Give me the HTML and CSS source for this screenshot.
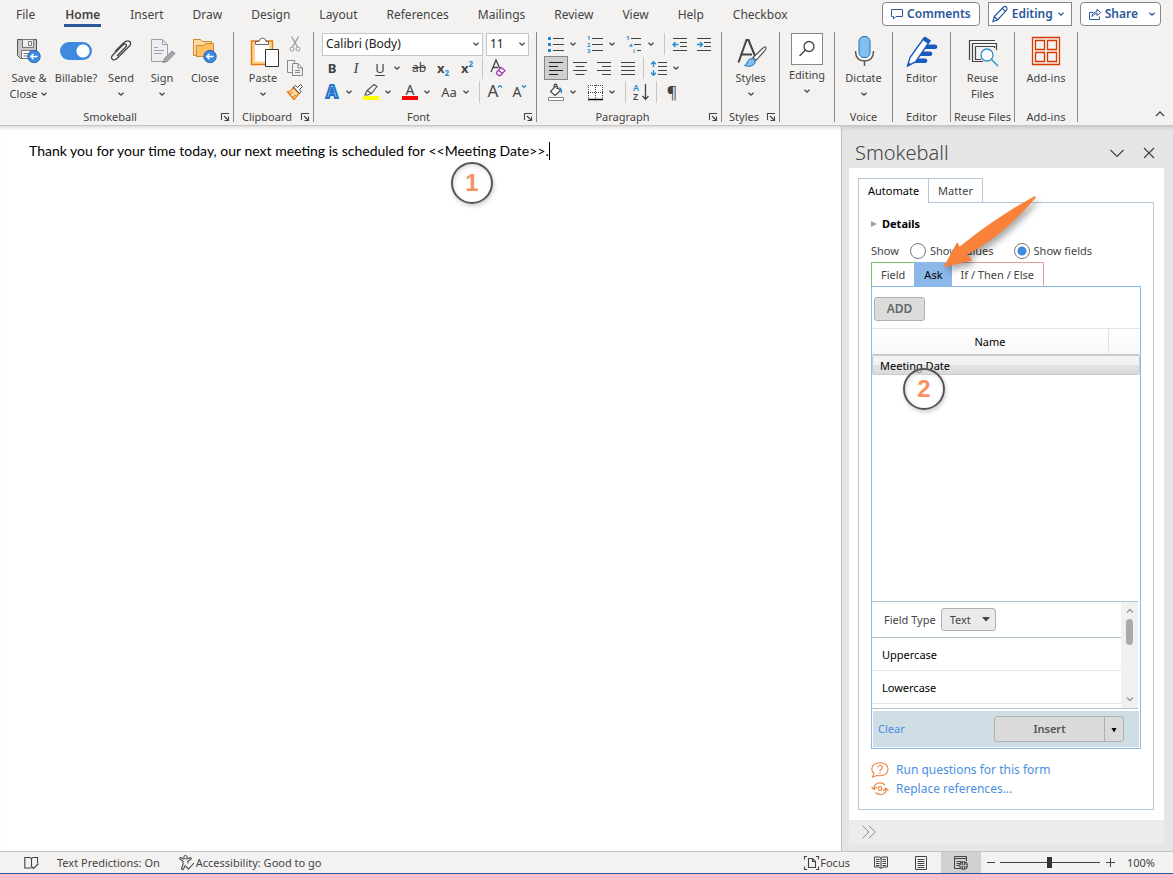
FILE: index.html
```html
<!DOCTYPE html>
<html lang="en">
<head>
  <meta charset="UTF-8">
  <title>Word - Smokeball</title>
  <link rel="stylesheet" href="styles.css">
</head>
<body>
  <!-- shared icons -->
  <svg class="defs" aria-hidden="true">
    <symbol id="chev" viewBox="0 0 8 8"><path d="M1.5 2.8L4 5.2L6.5 2.8" fill="none" stroke="currentColor" stroke-width="1.3"/></symbol>
    <symbol id="launch" viewBox="0 0 10 10"><path d="M1.5 8V1.500H9M4 4L8 8M8.500 4.500V8.500H4.500" fill="none" stroke="#444" stroke-width="1.1"/></symbol>
    <symbol id="back" viewBox="0 0 14 14"><circle cx="7" cy="7" r="6.200" fill="#3f8ae0" stroke="#2468b8"/><path d="M10.500 7H4M6.500 4.300L3.800 7L6.500 9.700" fill="none" stroke="#fff" stroke-width="1.300"/></symbol>
  </svg>

  <header>
    <div class="top">
      <nav class="menu">
        <a href="#">File</a>
        <a href="#" class="current">Home</a>
        <a href="#">Insert</a>
        <a href="#">Draw</a>
        <a href="#">Design</a>
        <a href="#">Layout</a>
        <a href="#">References</a>
        <a href="#">Mailings</a>
        <a href="#">Review</a>
        <a href="#">View</a>
        <a href="#">Help</a>
        <a href="#">Checkbox</a>
      </nav>
      <div class="actions">
        <button class="comments"><svg width="12" height="12" viewBox="0 0 12 12"><path d="M.5 1.500H11.500V8.500H5L2.500 11V8.500H.5Z" fill="none" stroke="#2b579a"/></svg>Comments</button>
        <button class="mode"><svg width="16" height="18" viewBox="0 0 16 18"><path d="M1 16.500L2.300 11.500L11.500 2Q13 .8 14.400 2.200Q15.800 3.700 14.500 5.200L5.500 15ZM10.200 3.400L13.200 6.400M2.300 11.500L5.500 15" fill="none" stroke="#2b579a" stroke-width="1.200"/></svg>Editing<svg width="8" height="8"><use href="#chev"/></svg></button>
        <button class="share"><svg width="12" height="12" viewBox="0 0 12 12"><path d="M4 4.500H.5V11.500H10.500V8.500M3 8.500Q3.500 4 8 3.800V1L11.500 4.500L8 7.500V5.500Q5 5.500 3 8.500Z" fill="none" stroke="#2b579a"/></svg>Share<svg class="last" width="8" height="8"><use href="#chev"/></svg></button>
      </div>
    </div>

    <div class="ribbon">
      <section class="group smokeball">
        <div class="tools">
          <button class="big w46"><svg width="32" height="32" viewBox="0 0 32 32"><path d="M4.500 3.500H23.500V22.500H7.500L4.500 19.500Z" fill="#c8c6c4" stroke="#555"/><path d="M9.500 3.500H20.500V11.500H9.500Z" fill="#eee" stroke="#777"/><path d="M15.500 5.500H18.500V9.500H15.500Z" fill="#fff" stroke="#777"/><path d="M8.500 14.500H21.500V22.500H8.500Z" fill="#fff" stroke="#777"/><path d="M10.500 17.500H17M10.500 20H15" stroke="#777"/><use href="#back" x="14" y="13.500" width="14" height="14"/></svg><span>Save &amp;<br>Close <svg width="8" height="8"><use href="#chev"/></svg></span></button>
          <label class="big w48"><input type="checkbox" class="switch" checked><span>Billable?</span></label>
          <button class="big w42"><svg width="32" height="32" viewBox="0 0 32 32"><path d="M12 20L20.500 11.300Q22.300 9.400 20.800 8.300Q19.300 7.400 17.800 9L8.300 18.500Q5.300 21.500 7.300 23.200Q9.500 25 12.500 22L24 10.500Q27 7.200 24.500 5.400Q22 3.800 19 6.500L10 15.500" fill="none" stroke="#444" stroke-width="1.300"/></svg><span>Send<br><svg width="8" height="8"><use href="#chev"/></svg></span></button>
          <button class="big w40"><svg width="32" height="32" viewBox="0 0 32 32"><path d="M5.500 3.500H16.500L21.500 8.500V25.500H5.500Z" fill="#f0eef2" stroke="#a19fa5"/><path d="M16.500 3.500V8.500H21.500M8 11.500H12M8 14.500H18M8 17.500H16" fill="none" stroke="#a19fa5"/><path d="M17 26.500L18.500 22.500L26 15L29 17.500L21 25.500Z" fill="#a8a6aa" stroke="#8d8b90"/></svg><span>Sign<br><svg width="8" height="8"><use href="#chev"/></svg></span></button>
          <button class="big w46"><svg width="32" height="32" viewBox="0 0 32 32"><path d="M4.500 19.500V3.500H11.500L13.500 5.500H22.500V19.500Z" fill="#fbd9a0" stroke="#c98b2b"/><path d="M7.500 20.500V9.500H14.500L17 7.500H24.500V20.500Z" fill="#ffbf5e" stroke="#c98b2b"/><use href="#back" x="14" y="13.500" width="14" height="14"/></svg><span>Close</span></button>
        </div>
        <div class="caption"><span>Smokeball</span><button aria-label="Smokeball options"><svg width="10" height="10"><use href="#launch"/></svg></button></div>
      </section>

      <section class="group clipboard">
        <div class="tools">
          <button class="big w46"><svg width="34" height="32" viewBox="-1 0 34 32"><path d="M6.500 6.500H23.500V27H6.500Z" fill="#fff" stroke="#ffd28a" stroke-width="3"/><path d="M4.500 5H25.500V28.500H4.500Z" fill="none" stroke="#e07a10" stroke-width="1.400"/><path d="M8.500 8.500V5.500H12Q12.500 2 15.500 2Q18.500 2 19 5.500H21.500V8.500Z" fill="#fff" stroke="#666"/><path d="M18.500 13.500H31.500V30.500H18.500Z" fill="#fff" stroke="#333"/></svg><span>Paste<br><svg width="8" height="8"><use href="#chev"/></svg></span></button>
          <div class="stack">
            <button class="small" aria-label="Cut"><svg width="18" height="18" viewBox="0 0 18 18"><path d="M5.500 1.500L11.500 12M12.500 1.500L6.500 12" fill="none" stroke="#a19f9d" stroke-width="1.400"/><circle cx="6" cy="14" r="2" fill="none" stroke="#a19f9d"/><circle cx="12" cy="14" r="2" fill="none" stroke="#a19f9d"/></svg></button>
            <button class="small" aria-label="Copy"><svg width="18" height="18" viewBox="0 0 18 18"><path d="M6.500 13.500H1.500V1.500H8.500V4.500M6.500 4.500H12L16.500 9V16.500H6.500ZM12 4.500V9H16.500M9 11.500H14M9 13.500H14" fill="none" stroke="#8a8886"/></svg></button>
            <button class="small" aria-label="Format Painter"><svg width="18" height="18" viewBox="0 0 18 18"><path d="M7 4.500L13 10.500L8 16.500L1.500 9Q5 8.500 7 4.500Z" fill="#ffd9a8" stroke="#e07a10" stroke-width="1.300"/><path d="M3 11L7 9.500M6 14L10 12" stroke="#e07a10"/><path d="M7.500 4L9.500 2.500L11.500 4.500L14.500 1.500L16.500 3.500L13.500 6.500L15 8.500L13.500 10.500Z" fill="#fff" stroke="#444"/></svg></button>
          </div>
        </div>
        <div class="caption"><span>Clipboard</span><button aria-label="Clipboard options"><svg width="10" height="10"><use href="#launch"/></svg></button></div>
      </section>

      <section class="group font">
        <div class="tools rows">
          <div class="row combos">
            <select class="family" aria-label="Font"><option>Calibri (Body)</option></select>
            <select class="size" aria-label="Font size"><option>11</option></select>
          </div>
          <div class="row">
            <button class="small bold">B</button>
            <button class="small italic">I</button>
            <span class="split"><button class="small underline">U</button><button class="drop" aria-label="Underline style"><svg width="8" height="8"><use href="#chev"/></svg></button></span>
            <button class="small strike">ab</button>
            <button class="small script">x<sub>2</sub></button>
            <button class="small script">x<sup>2</sup></button>
            <i class="sep"></i>
            <button class="small" aria-label="Clear formatting"><svg width="20" height="20" viewBox="0 0 20 20"><path d="M3 14L8 2L12 11M5 9.500H10" fill="none" stroke="#444" stroke-width="1.300"/><path d="M8.500 14.500L13 9.500L17 12.500L12.500 17.500H10.500L8.500 15.500ZM10.500 12.500L14.500 15.500" fill="#fff" stroke="#a33ab5" stroke-width="1.300"/></svg></button>
          </div>
          <div class="row">
            <span class="split"><button class="small" aria-label="Text effects"><svg width="18" height="18" viewBox="0 0 18 18"><text x="9" y="15" text-anchor="middle" class="glow">A</text></svg></button><button class="drop" aria-label="Text effects menu"><svg width="8" height="8"><use href="#chev"/></svg></button></span>
            <span class="split"><button class="small" aria-label="Highlight"><svg width="18" height="18" viewBox="0 0 18 18"><path d="M3 12L5 7.500L12 1.500L15 3.500L9.500 10.500L5.500 12ZM5 7.500L9.500 10.500" fill="none" stroke="#555" stroke-width="1.200"/><path d="M1 13H17V17H1Z" fill="#ff0"/></svg></button><button class="drop" aria-label="Highlight color"><svg width="8" height="8"><use href="#chev"/></svg></button></span>
            <span class="split"><button class="small" aria-label="Font color"><svg width="18" height="18" viewBox="0 0 18 18"><text x="9" y="11.500" text-anchor="middle" class="letter">A</text><path d="M1 13H17V17H1Z" fill="#f00"/></svg></button><button class="drop" aria-label="Font color menu"><svg width="8" height="8"><use href="#chev"/></svg></button></span>
            <span class="split"><button class="small">Aa</button><button class="drop" aria-label="Change case menu"><svg width="8" height="8"><use href="#chev"/></svg></button></span>
            <i class="sep"></i>
            <button class="small" aria-label="Grow font"><svg width="18" height="18" viewBox="0 0 18 18"><text x="7" y="14" text-anchor="middle" class="letter large">A</text><path d="M12 4.500L14 2.500L16 4.500" fill="none" stroke="#1e8bd1" stroke-width="1.200"/></svg></button>
            <button class="small" aria-label="Shrink font"><svg width="18" height="18" viewBox="0 0 18 18"><text x="7" y="14" text-anchor="middle" class="letter">A</text><path d="M12 2.500L14 4.500L16 2.500" fill="none" stroke="#1e8bd1" stroke-width="1.200"/></svg></button>
          </div>
        </div>
        <div class="caption"><span>Font</span><button aria-label="Font options"><svg width="10" height="10"><use href="#launch"/></svg></button></div>
      </section>

      <section class="group paragraph">
        <div class="tools rows">
          <div class="row">
            <span class="split"><button class="small" aria-label="Bullets"><svg width="18" height="18" viewBox="0 0 18 18"><path d="M1 2H4V5H1ZM1 8H4V11H1ZM1 14H4V17H1Z" fill="#1e8bd1"/><path d="M6 3.500H17M6 9.500H17M6 15.500H17" stroke="#444"/></svg></button><button class="drop" aria-label="Bullet library"><svg width="8" height="8"><use href="#chev"/></svg></button></span>
            <span class="split"><button class="small" aria-label="Numbering"><svg width="18" height="18" viewBox="0 0 18 18"><g class="digits"><text x="1" y="5">1</text><text x="1" y="11.500">2</text><text x="1" y="18">3</text></g><path d="M6 3.500H17M6 9.500H17M6 15.500H17" stroke="#444"/></svg></button><button class="drop" aria-label="Numbering library"><svg width="8" height="8"><use href="#chev"/></svg></button></span>
            <span class="split"><button class="small" aria-label="Multilevel list"><svg width="18" height="18" viewBox="0 0 18 18"><g class="digits"><text x="1" y="5">1</text><text x="4" y="11.500">a</text><text x="8" y="18">i</text></g><path d="M6 3.500H16M9 9.500H16M12 15.500H16" stroke="#444"/></svg></button><button class="drop" aria-label="List library"><svg width="8" height="8"><use href="#chev"/></svg></button></span>
            <i class="sep"></i>
            <button class="small" aria-label="Decrease indent"><svg width="18" height="18" viewBox="0 0 18 18"><path d="M2 3.500H16M9 7.500H16M9 11.500H16M2 15.500H16" stroke="#444"/><path d="M7.500 9.500H2.500M4.500 7L2 9.500L4.500 12" fill="none" stroke="#1e8bd1" stroke-width="1.300"/></svg></button>
            <button class="small" aria-label="Increase indent"><svg width="18" height="18" viewBox="0 0 18 18"><path d="M2 3.500H16M9 7.500H16M9 11.500H16M2 15.500H16" stroke="#444"/><path d="M2 9.500H7M5 7L7.500 9.500L5 12" fill="none" stroke="#1e8bd1" stroke-width="1.300"/></svg></button>
          </div>
          <div class="row">
            <button class="small on" aria-label="Align left"><svg width="18" height="18" viewBox="0 0 18 18"><path d="M2 3.500H16M2 7.500H11M2 11.500H16M2 15.500H11" stroke="#222"/></svg></button>
            <button class="small" aria-label="Center"><svg width="18" height="18" viewBox="0 0 18 18"><path d="M2 3.500H16M4.500 7.500H13.500M2 11.500H16M4.500 15.500H13.500" stroke="#444"/></svg></button>
            <button class="small" aria-label="Align right"><svg width="18" height="18" viewBox="0 0 18 18"><path d="M2 3.500H16M7 7.500H16M2 11.500H16M7 15.500H16" stroke="#444"/></svg></button>
            <button class="small" aria-label="Justify"><svg width="18" height="18" viewBox="0 0 18 18"><path d="M2 3.500H16M2 7.500H16M2 11.500H16M2 15.500H16" stroke="#444"/></svg></button>
            <i class="sep"></i>
            <span class="split"><button class="small" aria-label="Line spacing"><svg width="18" height="18" viewBox="0 0 18 18"><path d="M8 3.500H17M8 7.500H17M8 11.500H17M8 15.500H17" stroke="#444"/><path d="M3.500 3V8M1 5.200L3.500 2.700L6 5.200M3.500 11V16M1 13.800L3.500 16.300L6 13.800" fill="none" stroke="#1e8bd1" stroke-width="1.300"/></svg></button><button class="drop" aria-label="Spacing options"><svg width="8" height="8"><use href="#chev"/></svg></button></span>
          </div>
          <div class="row">
            <span class="split"><button class="small" aria-label="Shading"><svg width="18" height="18" viewBox="0 0 18 18"><path d="M3.500 8.500L9 3L13.500 7.500L8 12.500ZM7 5V2Q8.500 .3 10 2V6" fill="#fff" stroke="#444" stroke-width="1.100"/><path d="M12 4Q16 5 15 11Q13 9 13 6Z" fill="#1e8bd1"/><path d="M1.500 14.500H16.500V17.500H1.500Z" fill="#fff" stroke="#888"/></svg></button><button class="drop" aria-label="Shading color"><svg width="8" height="8"><use href="#chev"/></svg></button></span>
            <span class="split"><button class="small" aria-label="Borders"><svg width="18" height="18" viewBox="0 0 18 18"><path d="M2 2H16V16H2Z" fill="#fff"/><path d="M2 2.500H17M2 9.500H17M2.500 2V16M9.500 2V16M16.500 2V16" fill="none" stroke="#444" stroke-dasharray="1 1"/><path d="M2 16.500H17" stroke="#000" stroke-width="1.500"/></svg></button><button class="drop" aria-label="Border options"><svg width="8" height="8"><use href="#chev"/></svg></button></span>
            <i class="sep"></i>
            <button class="small" aria-label="Sort"><svg width="18" height="18" viewBox="0 0 18 18"><text x="1" y="8" class="sort blue">A</text><text x="1" y="17" class="sort">Z</text><path d="M13.500 1V16M10.500 13L13.500 16.200L16.500 13" fill="none" stroke="#444" stroke-width="1.300"/></svg></button>
            <i class="sep"></i>
            <button class="small pilcrow">¶</button>
          </div>
        </div>
        <div class="caption"><span>Paragraph</span><button aria-label="Paragraph options"><svg width="10" height="10"><use href="#launch"/></svg></button></div>
      </section>

      <section class="group styles">
        <div class="tools">
          <button class="big"><svg width="32" height="32" viewBox="0 0 32 32"><path d="M3.500 26.500L11.500 4H13.500L20 20M6 18.500H17" fill="none" stroke="#444" stroke-width="2"/><path d="M18 21.500L28 12Q31 9.500 31 12Q31 13.500 29 15.500L21 24.500Z" fill="#fff" stroke="#555" stroke-width="1.200"/><path d="M9.500 29.500Q12 28.500 12.500 25.500Q14 22 18 22.500Q21 24 20 27Q17 32 9.500 29.500Z" fill="#83beec" stroke="#1e73b8"/></svg><span>Styles<br><svg width="8" height="8"><use href="#chev"/></svg></span></button>
        </div>
        <div class="caption"><span>Styles</span><button aria-label="Styles options"><svg width="10" height="10"><use href="#launch"/></svg></button></div>
      </section>

      <section class="group editing">
        <div class="tools">
          <button class="big"><span class="frame"><svg width="20" height="20" viewBox="0 0 20 20"><circle cx="12" cy="7.500" r="5" fill="none" stroke="#444" stroke-width="1.300"/><path d="M8.500 11L2.500 17" stroke="#444" stroke-width="1.400"/></svg></span><span>Editing<br><svg width="8" height="8"><use href="#chev"/></svg></span></button>
        </div>
      </section>

      <section class="group voice">
        <div class="tools">
          <button class="big"><svg width="32" height="32" viewBox="0 0 32 32"><rect x="11" y="0.500" width="11" height="21" rx="5" fill="#83beec" stroke="#1e73b8"/><path d="M7.500 15Q7.500 25 16.500 25Q25.500 25 25.500 15M16.500 25V30" fill="none" stroke="#555" stroke-width="1.400"/></svg><span>Dictate<br><svg width="8" height="8"><use href="#chev"/></svg></span></button>
        </div>
        <div class="caption"><span>Voice</span></div>
      </section>

      <section class="group editor">
        <div class="tools">
          <button class="big"><svg width="32" height="32" viewBox="0 0 32 32"><path d="M19 8.500H29.500A2.300 2.300 0 0 1 29.500 13H15ZM14.500 15.500H24.500A2.300 2.300 0 0 1 24.500 20H11ZM10 22.500H19.500A2.300 2.300 0 0 1 19.500 27H6Z" fill="#185abd"/><path d="M1.500 30L4 21.500L18 2L23.500 5.500L9.500 26Z" fill="#fff" stroke="#185abd" stroke-width="1.400"/><path d="M16.500 4L19 .5L25 4.500L22.500 8ZM1 31L2.500 26.500L5.500 28.500Z" fill="#185abd"/></svg><span>Editor</span></button>
        </div>
        <div class="caption"><span>Editor</span></div>
      </section>

      <section class="group reuse">
        <div class="tools">
          <button class="big"><svg width="32" height="32" viewBox="0 0 32 32"><path d="M2.500 24V4.500H28M5.500 26V7.500H29.500V14M8.500 10.500H27.500V12M8.500 10.500V23.500H14M5.500 25.500H16" fill="none" stroke="#444" stroke-width="1.200"/><circle cx="20" cy="19" r="6" fill="#fff" stroke="#2f8fd0" stroke-width="1.300"/><path d="M24.500 23.500L31 30" stroke="#2f8fd0" stroke-width="1.500"/></svg><span>Reuse<br>Files</span></button>
        </div>
        <div class="caption"><span>Reuse Files</span></div>
      </section>

      <section class="group addins">
        <div class="tools">
          <button class="big"><svg width="32" height="32" viewBox="0 0 32 32"><path d="M2.500 1.500H29.500V28.500H2.500ZM5.500 4.500H14.500V13.500H5.500ZM17.500 4.500H26.500V13.500H17.500ZM5.500 16.500H14.500V25.500H5.500ZM17.500 16.500H26.500V25.500H17.500Z" fill="none" stroke="#d83b01" stroke-width="1.300"/></svg><span>Add-ins</span></button>
        </div>
        <div class="caption"><span>Add-ins</span></div>
      </section>

      <button class="collapse" aria-label="Collapse ribbon"><svg width="10" height="8" viewBox="0 0 10 8"><path d="M1 6L5 2L9 6" fill="none" stroke="#444" stroke-width="1.300"/></svg></button>
    </div>
  </header>

  <main>
    <article class="document">
      <p>Thank you for your time today, our next meeting is scheduled for &lt;&lt;Meeting Date&gt;&gt;.<i class="caret"></i></p>
      <span class="step one">1</span>
    </article>

    <aside class="pane">
      <div class="pane-title">
        <h1>Smokeball</h1>
        <button aria-label="Pane options"><svg width="14" height="14" viewBox="0 0 14 14"><path d="M.5 4L7 10.500L13.500 4" fill="none" stroke="#444" stroke-width="1.200"/></svg></button>
        <button aria-label="Close pane"><svg width="12" height="12" viewBox="0 0 12 12"><path d="M1 1L11 11M11 1L1 11" fill="none" stroke="#444" stroke-width="1.200"/></svg></button>
      </div>

      <div class="card">
        <div class="tabs">
          <button class="active">Automate</button>
          <button>Matter</button>
        </div>
        <div class="automate">
          <button class="details"><svg width="6" height="8" viewBox="0 0 6 8"><path d="M0 1L6 4L0 7Z" fill="#8fa5b0"/></svg>Details</button>
          <div class="show">
            <span>Show</span>
            <label><input type="radio" name="show">Show values</label>
            <label><input type="radio" name="show" checked>Show fields</label>
          </div>

          <div class="kinds">
            <button class="field">Field</button>
            <button class="ask">Ask</button>
            <button class="cond">If / Then / Else</button>
          </div>
          <div class="asks">
            <button class="add">ADD</button>
            <table>
              <thead><tr><th>Name</th><th class="rest"></th></tr></thead>
              <tbody><tr><td colspan="2">Meeting Date</td></tr></tbody>
            </table>
            <div class="formats">
              <div class="list">
                <div class="type"><label for="fieldType">Field Type</label><select id="fieldType"><option>Text</option></select></div>
                <div class="item">Uppercase</div>
                <div class="item">Lowercase</div>
              </div>
              <div class="scroll">
                <svg width="8" height="8" viewBox="0 0 8 8"><path d="M1 5.500L4 2.500L7 5.500" fill="none" stroke="#999" stroke-width="1.300"/></svg>
                <i></i>
                <svg width="8" height="8" viewBox="0 0 8 8"><path d="M1 2.500L4 5.500L7 2.500" fill="none" stroke="#999" stroke-width="1.300"/></svg>
              </div>
            </div>
            <div class="bar">
              <a href="#">Clear</a>
              <span class="insert"><button>Insert</button><button class="more" aria-label="Insert options"><svg width="6" height="6" viewBox="0 0 6 6"><path d="M.5 1H5.500L3 5.500Z" fill="#000"/></svg></button></span>
            </div>
          </div>

          <div class="links">
            <a href="#"><svg width="18" height="16" viewBox="0 0 18 16"><path d="M1.500 15L3 11.500Q.8 9.800 .8 7Q1.200 1 9 .8Q16.800 1 17 7Q16.800 13.500 9 13.800Q7.500 13.800 6 13.500Z" fill="none" stroke="#ee8544" stroke-width="1.100"/><path d="M6.800 5.500Q7 3.500 9 3.500Q11.200 3.500 11.200 5.400Q11.200 6.500 10 7.200Q9 7.800 9 9" fill="none" stroke="#ee8544" stroke-width="1.200"/><circle cx="9" cy="11" r=".8" fill="#ee8544"/></svg>Run questions for this form</a>
            <a href="#"><svg width="18" height="16" viewBox="0 0 18 16"><path d="M3 8.500Q2.500 4 6.500 2.200Q11 .8 14 4M15 7.500Q15.500 11.500 12 13Q7.500 14.500 4.500 11.500M.5 6L3 8.500L5.800 6M12 9.800L15 7.200L17.500 9.800" fill="none" stroke="#ee8544" stroke-width="1.200"/><circle cx="9" cy="7.500" r="1.800" fill="none" stroke="#ee8544" stroke-width="1.200"/></svg>Replace references...</a>
          </div>
        </div>
      </div>
      <div class="pane-foot"><button aria-label="Expand"><svg width="14" height="14" viewBox="0 0 14 14"><path d="M.5 .8L7 7L.5 13.200M7 .8L13.300 7L7 13.200" fill="none" stroke="#8a8a8a"/></svg></button></div>

      <svg class="arrow" width="104" height="84" viewBox="0 0 104 84"><path d="M94.500 4.200Q96.500 4 95.500 6Q58.200 48 27 62L32.300 68.300L3.300 75.500L17.300 50L19.500 54.700Q56.800 24.600 94.500 4.200Z" fill="#f9813a"/></svg>
      <span class="step two">2</span>
    </aside>
  </main>

  <footer>
    <button class="proof" aria-label="Proofing"><svg width="16" height="14" viewBox="0 0 16 14"><path d="M7.500 12H.8V1.500H5.500Q7.500 1.500 7.500 3.500V11M7.500 3.500Q7.500 1.500 9.500 1.500H13.500V7M7 10L9.500 12.500L14.500 7.500" fill="none" stroke="#444" stroke-width="1.100"/></svg></button>
    <button class="predict">Text Predictions: On</button>
    <button class="access"><svg width="16" height="16" viewBox="0 0 16 16"><circle cx="6.500" cy="2.200" r="1.700" fill="none" stroke="#444"/><path d="M5 4L1.500 2.500Q0 3.500 1.500 4.500L4 6V9.500L2.500 14Q3.500 15.500 4.500 14L6.500 10M8 4L11.500 2.500Q13 3.500 11.500 4.500L9 6V8.500M7 11.500L9.500 14L15 8" fill="none" stroke="#444" stroke-width="1.100"/></svg>Accessibility: Good to go</button>
    <div class="views">
      <button class="focus"><svg width="15" height="14" viewBox="0 0 15 14"><path d="M3 .5H.5V3.500M12 .5H14.500V3.500M.5 10.500V13.500H3M14.500 10.500V13.500H12M4.500 2.500H8.500L11.500 5.500V11.500H4.500ZM8.500 2.500V5.500H11.500" fill="none" stroke="#444" stroke-width="1.100"/></svg>Focus</button>
      <button class="view" aria-label="Read mode"><svg width="14" height="13" viewBox="0 0 14 13"><path d="M.5 1H5Q7 1 7 2.500Q7 1 9 1H13.500V11H9L7 12.500L5 11H.5ZM7 2V12M2 3.500H5.500M2 5.500H5.500M2 7.500H5.500M2 9.500H5.500M8.500 3.500H12M8.500 5.500H12M8.500 7.500H12M8.500 9.500H12" fill="none" stroke="#444"/></svg></button>
      <button class="view" aria-label="Print layout"><svg width="12" height="14" viewBox="0 0 12 14"><path d="M.5 .5H11.500V13.500H.5ZM2.500 3.500H9.500M2.500 5.500H9.500M2.500 7.500H9.500M2.500 9.500H9.500M2.500 11.500H9.500" fill="none" stroke="#444"/></svg></button>
      <button class="view on" aria-label="Web layout"><svg width="14" height="14" viewBox="0 0 14 14"><path d="M6 12.500H.5V.5H12.500V5M.5 2.500H12.500M2.500 5.500H7M2.500 7.500H6M2.500 9.500H5" fill="none" stroke="#444"/><circle cx="9.500" cy="9.500" r="4" fill="#555" stroke="#444"/><path d="M5.500 9.500H13.500M9.500 5.500V13.500M7.500 7Q6.800 9.500 7.500 12.500M11.500 7Q12.200 9.500 11.500 12.500" fill="none" stroke="#ddd" stroke-width=".7"/></svg></button>
      <button class="zoom" aria-label="Zoom out"><svg width="9" height="9" viewBox="0 0 9 9"><path d="M0 4.500H8" stroke="#444"/></svg></button>
      <input type="range" min="0" max="100" value="50" aria-label="Zoom">
      <button class="zoom" aria-label="Zoom in"><svg width="9" height="9" viewBox="0 0 9 9"><path d="M0 4.500H9M4.500 0V9" stroke="#444"/></svg></button>
      <span class="percent">100%</span>
    </div>
  </footer>
</body>
</html>
```

FILE: styles.css
```css
* {
  box-sizing: border-box;
}
body {
  margin: 0;
  height: 100vh;
  display: flex;
  flex-direction: column;
  background: #fff;
  color: #444;
  font-family: "Noto Sans", "Open Sans", sans-serif;
  font-size: 12px;
  line-height: 16px;
}
button, select, input {
  font: inherit;
  color: inherit;
}
button {
  padding: 0;
  border: none;
  background: none;
}
button, a {
  white-space: nowrap;
}
a {
  text-decoration: none;
}
svg {
  flex: none;
  overflow: visible;
}
.defs {
  position: absolute;
  width: 0;
  height: 0;
}

/* menu and ribbon */
header {
  background: #f3f2f1;
  border-bottom: 1px solid #c8c6c4;
}
.top {
  display: flex;
  height: 32px;
}
.menu {
  display: flex;
  gap: 29px;
  padding-left: 16px;
}
.menu a {
  height: 27px;
  padding-top: 7px;
  color: #444;
}
.menu .current {
  padding: 7px 1px 0;
  font-weight: 600;
  border-bottom: 3px solid #2b579a;
}
.actions {
  display: flex;
  align-items: flex-start;
  gap: 8px;
  margin-left: auto;
  padding: 2px 12px 0 0;
}
.actions button {
  display: flex;
  align-items: center;
  gap: 4px;
  height: 24px;
  padding: 0 8px;
  background: #fff;
  border: 1px solid #8a8886;
  border-radius: 4px;
  color: #2b579a;
  font-weight: 600;
}
.actions .mode {
  padding: 0 6px 0 3px;
  border-radius: 0;
}
.actions .last {
  margin-left: 6px;
}
.actions .share {
  padding-right: 4px;
}
.ribbon {
  display: flex;
  height: 93px;
  padding-bottom: 3px;
}
.group {
  display: flex;
  flex-direction: column;
  border-right: 1px solid #8a8886;
}
.smokeball { width: 234px; }
.clipboard { width: 80px; }
.font { width: 223px; }
.paragraph { width: 185px; }
.editing { width: 55px; }
.styles, .voice, .editor { width: 58px; }
.reuse { width: 64px; }
.addins { width: 63px; }
.tools {
  display: flex;
  flex: none;
  justify-content: center;
  height: 77px;
}
.smokeball .tools, .clipboard .tools {
  justify-content: flex-start;
  padding-left: 6px;
}
.rows {
  flex-direction: column;
  justify-content: flex-start;
}
.font .rows {
  padding-left: 6px;
}
.paragraph .rows {
  padding-left: 7px;
}
.row, .split {
  display: flex;
  align-items: center;
  height: 24px;
}
.split {
  margin-right: 5px;
}
.sep {
  width: 1px;
  height: 22px;
  margin: 0 3px;
  background: #c8c6c4;
}
.big {
  display: flex;
  flex-direction: column;
  align-items: center;
  align-self: flex-start;
  padding-top: 4px;
  font-size: 11px;
  text-align: center;
  white-space: nowrap;
}
.big > span {
  margin-top: 2px;
}
.big .frame {
  display: flex;
  align-items: center;
  justify-content: center;
  width: 32px;
  height: 32px;
  margin-top: 0;
  background: #fff;
  border: 1px solid #8a8886;
}
.editing .big {
  padding-top: 1px;
}
.w46 { width: 46px; }
.w48 { width: 48px; }
.w42 { width: 42px; }
.w40 { width: 40px; }
.switch {
  appearance: none;
  width: 32px;
  height: 18px;
  margin: 6px 0 8px;
  border-radius: 9px;
  background: radial-gradient(circle at 23px 9px, #fff 6px, #3f8ae0 7px);
}
.small, .drop {
  display: flex;
  align-items: center;
  justify-content: center;
  width: 24px;
  height: 24px;
  font-size: 13px;
}
.drop {
  width: 10px;
}
.small.on {
  background: #d2d0ce;
  border: 1px solid #8a8886;
}
.stack {
  display: flex;
  flex-direction: column;
  margin-left: -3px;
}
.combos {
  gap: 3px;
  padding-left: 2px;
}
.combos select {
  appearance: none;
  height: 23px;
  padding: 0 3px;
  border: 1px solid #c8c6c4;
  border-radius: 0;
  color: #222;
  background: #fff url("data:image/svg+xml,%3Csvg xmlns='http://www.w3.org/2000/svg' width='8' height='8'%3E%3Cpath d='M1.500 2.800L4 5.200L6.500 2.800' fill='none' stroke='%23444' stroke-width='1.300'/%3E%3C/svg%3E") no-repeat right 2px center;
}
.combos .family {
  width: 161px;
}
.combos .size {
  width: 43px;
}
.bold, .script {
  font-weight: 700;
}
.italic {
  font-family: "Liberation Serif", serif;
  font-style: italic;
  font-size: 15px;
}
.underline {
  text-decoration: underline;
  text-underline-offset: 2px;
}
.strike {
  text-decoration: line-through;
  font-size: 12px;
}
.script sub, .script sup {
  font-size: 8px;
  color: #1e8bd1;
}
.script sub {
  padding-top: 9px;
}
.script sup {
  padding-bottom: 9px;
}
.letter {
  font-size: 14px;
  fill: #444;
}
.large {
  font-size: 17px;
}
.glow {
  font-size: 17px;
  font-weight: 700;
  fill: #fff;
  stroke: #1e73c8;
  stroke-width: 2px;
}
.digits {
  font-size: 6px;
  font-weight: 700;
  fill: #1e8bd1;
}
.sort {
  font-size: 9px;
  font-weight: 600;
  fill: #444;
}
.blue {
  fill: #1e8bd1;
}
.pilcrow {
  font-size: 16px;
}
.caption {
  display: flex;
  height: 13px;
  font-size: 11px;
}
.caption span {
  flex: 1;
  text-align: center;
  white-space: nowrap;
}
.caption button {
  display: flex;
  align-items: center;
  width: 13px;
  height: 16px;
}
.collapse {
  margin: auto 8px 0 auto;
}

/* document */
main {
  flex: 1;
  display: flex;
  min-height: 0;
}
.document {
  position: relative;
  flex: 1;
  box-shadow: inset 0 4px 4px -3px #ccc;
}
.document p {
  display: flex;
  align-items: center;
  margin: 15px 0 0 29px;
  color: #000;
  font-family: Lato, sans-serif;
  font-size: 14px;
  line-height: 20px;
}
.caret {
  width: 1px;
  height: 18px;
  background: #000;
}
.step {
  position: absolute;
  display: flex;
  align-items: center;
  justify-content: center;
  width: 42px;
  height: 42px;
  border: 2px solid #555;
  border-radius: 50%;
  box-shadow: 1px 2px 4px #ccc, inset 1px 2px 4px #ddd;
  color: #f79361;
  font-family: "Liberation Sans", sans-serif;
  font-size: 24px;
  font-weight: 700;
}
.one {
  left: 451px;
  top: 36px;
}
.two {
  left: 61px;
  top: 242px;
}
.arrow {
  position: absolute;
  left: 98px;
  top: 66px;
  filter: drop-shadow(3px 4px 3px #0005);
}

/* smokeball pane */
.pane {
  position: relative;
  display: flex;
  flex-direction: column;
  width: 332px;
  padding: 0 9px 7px 7px;
  background: #e6e6e6;
  border-left: 1px solid #c0c0c0;
  box-shadow: inset 0 4px 4px -3px #bbb;
  font-size: 11px;
}
.pane-title {
  display: flex;
  align-items: center;
  gap: 19px;
  height: 42px;
  padding: 12px 9px 0 6px;
}
.pane-title h1 {
  flex: 1;
  margin: 0;
  font-size: 20px;
  font-weight: 300;
}
.pane-title button {
  display: flex;
}
.card {
  flex: 1;
  display: flex;
  flex-direction: column;
  padding: 10px 10px 10px 9px;
  background: #fff;
}
.tabs {
  display: flex;
  height: 24px;
}
.tabs button {
  position: relative;
  height: 24px;
  padding: 0 9px;
  border: 1px solid #b5c7d8;
  border-left: none;
  border-bottom: none;
}
.tabs .active {
  height: 25px;
  border-left: 1px solid #b5c7d8;
  background: #fff;
  color: #000;
}
.automate {
  flex: 1;
  display: flex;
  flex-direction: column;
  padding: 11px 12px;
  border: 1px solid #b5c7d8;
}
.details {
  display: flex;
  align-items: center;
  gap: 5px;
  height: 20px;
  color: #000;
  font-weight: 700;
}
.show {
  display: flex;
  align-items: center;
  height: 20px;
  margin: 7px 0 1px;
}
.show label {
  display: flex;
  align-items: center;
  gap: 4px;
  margin-left: 11px;
}
.show label + label {
  margin-left: 20px;
}
.show input {
  appearance: none;
  width: 16px;
  height: 16px;
  margin: 0;
  border: 1px solid #777;
  border-radius: 50%;
  background: #fff;
}
.show input:checked {
  background: radial-gradient(circle, #3f8ae0 4px, #fff 5px);
}
.kinds {
  display: flex;
}
.kinds button {
  height: 24px;
  padding: 0 9px;
  border: 1px solid #7fc06a;
  border-right: none;
  border-bottom: none;
}
.kinds .ask {
  border-color: #8bb8e8;
  background: #8bb8e8;
  color: #000;
}
.kinds .cond {
  border: 1px solid #e0a0a0;
  border-width: 1px 1px 0 0;
}
.asks {
  flex: 1;
  display: flex;
  flex-direction: column;
  border: 1px solid #8bb8e8;
}
.add {
  align-self: flex-start;
  width: 51px;
  height: 24px;
  margin: 10px 0 7px 2px;
  border: 1px solid #b0b0b0;
  border-radius: 3px;
  background: #dcdcdc;
  color: #666;
  font-size: 12px;
  font-weight: 600;
}
table {
  border-collapse: separate;
  border-spacing: 0;
  margin-bottom: auto;
}
th {
  height: 27px;
  padding: 0;
  border: 1px solid #e3e3e3;
  border-width: 1px 1px 1px 0;
  border-bottom-color: #c8c8c8;
  background: linear-gradient(#fff, #f7f7f8);
  color: #000;
  font-weight: 400;
}
.rest {
  width: 31px;
  border-right: none;
}
td {
  height: 20px;
  padding: 2px 7px 0;
  border: 1px solid #ccc;
  border-radius: 2px;
  background: linear-gradient(#f2f2f2 50%, #e4e4e4 50%, #dadada);
  color: #000;
}
.formats {
  display: flex;
  height: 108px;
  margin-right: 2px;
  border: 1px solid #afc3cf;
  border-width: 1px 0;
}
.list {
  flex: 1;
}
.type {
  display: flex;
  align-items: center;
  gap: 5px;
  height: 36px;
  padding-left: 12px;
  border-bottom: 1px solid #afc3cf;
}
.type select {
  appearance: none;
  width: 55px;
  height: 23px;
  padding: 0 8px;
  border: 1px solid #b0b0b0;
  border-radius: 3px;
  background: #ebebeb url("data:image/svg+xml,%3Csvg xmlns='http://www.w3.org/2000/svg' width='8' height='5'%3E%3Cpath d='M0 0H8L4 4.500Z' fill='%23444'/%3E%3C/svg%3E") no-repeat right 5px center;
}
.item {
  height: 33px;
  padding: 9px 10px 0;
  border-bottom: 1px solid #e6e6e6;
  color: #000;
}
.scroll {
  display: flex;
  flex-direction: column;
  align-items: center;
  width: 17px;
  padding: 5px 0;
  background: #f0f0f0;
}
.scroll i {
  width: 7px;
  height: 26px;
  margin: 4px 0 auto;
  border-radius: 4px;
  background: #aaa;
}
.bar {
  display: flex;
  align-items: center;
  justify-content: space-between;
  height: 36px;
  margin: 2px 1px 1px;
  padding: 0 15px 0 5px;
  background: #cfdde5;
}
.bar a, .links a {
  color: #4a90e2;
}
.insert {
  display: flex;
  width: 130px;
  height: 26px;
  border: 1px solid #b0b0b0;
  border-radius: 3px;
  background: #dadada;
}
.insert button {
  flex: 1;
  color: #555;
  font-weight: 600;
}
.insert .more {
  flex: none;
  width: 19px;
  border-left: 1px solid #b0b0b0;
}
.links {
  display: flex;
  flex-direction: column;
  margin-top: 11px;
  font-size: 12px;
}
.links a {
  display: flex;
  align-items: center;
  gap: 7px;
  height: 19px;
}
.pane-foot {
  display: flex;
  align-items: center;
  height: 24px;
  padding-left: 13px;
  background: #ececec;
}
.pane-foot button {
  display: flex;
}

/* status bar */
footer {
  display: flex;
  align-items: center;
  height: 23px;
  padding-left: 24px;
  background: #f3f2f1;
  border-top: 1px solid #c8c6c4;
  border-bottom: 1px solid #2b579a;
  font-size: 11px;
}
footer button {
  display: flex;
  align-items: center;
  gap: 1px;
}
.predict {
  margin: 0 19px 0 17px;
}
.views {
  display: flex;
  align-items: center;
  align-self: stretch;
  margin-left: auto;
  padding-right: 18px;
}
.focus {
  margin-right: 11px;
}
.view {
  justify-content: center;
  align-self: stretch;
  width: 40px;
}
.view.on {
  background: #d2d0ce;
}
.zoom {
  margin-left: 6px;
}
.views input {
  appearance: none;
  width: 100px;
  height: 13px;
  margin: 0 0 0 4px;
  background: linear-gradient(#444, #444) no-repeat center / 100% 1px;
}
.views input::-webkit-slider-thumb {
  appearance: none;
  width: 5px;
  height: 11px;
  background: #333;
}
.percent {
  margin-left: 12px;
}
```
